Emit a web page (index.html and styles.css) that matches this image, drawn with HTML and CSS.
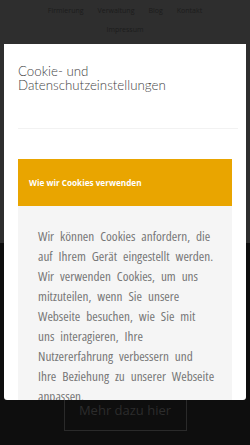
FILE: index.html
```html
<!DOCTYPE html>
<html lang="de">
<head>
<meta charset="utf-8">
<link rel="stylesheet" href="styles.css">
</head>
<body>
<div class="page">
  <header class="top">
    <nav class="nav">
      <a>Firmierung</a>
      <a>Verwaltung</a>
      <a>Blog</a>
      <a>Kontakt</a>
      <a>Impressum</a>
    </nav>
  </header>
  <section class="hero">
    <a class="more">Mehr dazu hier</a>
  </section>
</div>
<div class="modal">
  <h2 class="title">Cookie- und Datenschutzeinstellungen</h2>
  <hr class="sep">
  <div class="acc-head">Wie wir Cookies verwenden</div>
  <div class="acc-body">
    <p>Wir können Cookies anfordern, die auf Ihrem Gerät eingestellt werden. Wir verwenden Cookies, um uns mitzuteilen, wenn Sie unsere Webseite besuchen, wie Sie mit uns interagieren, Ihre Nutzererfahrung verbessern und Ihre Beziehung zu unserer Webseite anpassen.</p>
  </div>
</div>
</body>
</html>
```
FILE: styles.css
```css
html, body {
  margin: 0;
  padding: 0;
}
body {
  width: 250px;
  height: 445px;
  overflow: hidden;
  position: relative;
  background: #0e0e0e;
  font-family: "Open Sans", sans-serif;
}
.top {
  height: 243px;
  background: #2e2e2e;
}
.nav {
  display: flex;
  flex-wrap: wrap;
  justify-content: center;
  column-gap: 14px;
  row-gap: 10px;
  padding: 6px 40px 0;
  font-size: 7px;
  color: #1c1c1c;
}
.hero {
  display: flex;
  justify-content: center;
  padding-top: 145px;
}
.more {
  width: 121px;
  height: 41px;
  border: 1px solid #2a2a2a;
  color: #2c2c2c;
  font-size: 13px;
  display: flex;
  align-items: center;
  justify-content: center;
}
.modal {
  position: absolute;
  left: 4px;
  top: 44px;
  width: 242px;
  height: 356px;
  background: #fff;
  border-radius: 0 0 3px 3px;
  overflow: hidden;
  padding: 20px 14px 0;
  box-sizing: border-box;
}
.title {
  margin: 0;
  font-family: Lato, sans-serif;
  font-weight: 300;
  font-size: 13.3px;
  line-height: 14px;
  color: #444;
}
.sep {
  margin: 36px -6px 30px 0;
  border: 0;
  height: 1px;
  background: #f2f2f2;
}
.acc-head {
  height: 47px;
  background: #e9a500;
  color: #fff;
  font-weight: 700;
  font-size: 8.2px;
  display: flex;
  align-items: center;
  padding-left: 11px;
}
.acc-body {
  background: #f5f5f5;
  padding: 20px 16px 20px 20px;
}
.acc-body p {
  margin: 0;
  font-size: 13.2px;
  line-height: 20px;
  color: #777;
  font-stretch: 87.5%;
  word-spacing: 3.5px;
}
```
